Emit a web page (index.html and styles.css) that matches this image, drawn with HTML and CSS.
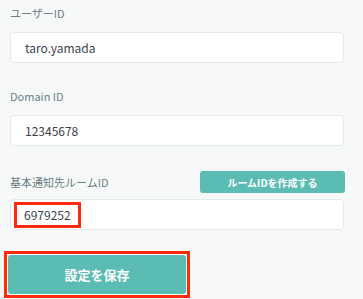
FILE: index.html
```html
<!DOCTYPE html>
<html lang="ja">
<head>
    <meta charset="UTF-8">
    <meta name="viewport" content="width=device-width, initial-scale=1.0">
    <title>設定</title>
    <link rel="stylesheet" href="styles.css">
</head>
<body>
    <div class="settings">
        <div class="field">
            <label class="label">ユーザーID</label>
            <div class="input">taro.yamada</div>
        </div>

        <div class="field">
            <label class="label">Domain ID</label>
            <div class="input">12345678</div>
        </div>

        <div class="field">
            <div class="label-row">
                <label class="label">基本通知先ルームID</label>
                <button class="small-btn">ルームIDを作成する</button>
            </div>
            <div class="input input-marked">
                <span class="mark">6979252</span>
            </div>
        </div>

        <div class="save-wrap">
            <button class="save-btn">設定を保存</button>
        </div>
    </div>
</body>
</html>
```

FILE: styles.css
```css
body {
    margin: 0;
    background-color: #f7f9f9;
    font-family: 'Noto Sans CJK JP', 'Noto Sans', sans-serif;
}

.settings {
    padding: 5px 19px 0 10px;
}

.field {
    margin-bottom: 25px;
}

.field:nth-child(3) {
    margin-bottom: 21px;
}

.label {
    display: block;
    font-size: 11px;
    line-height: 16px;
    color: #6b7f86;
    margin-bottom: 11px;
}

.label-row {
    display: flex;
    justify-content: space-between;
    align-items: center;
    margin-bottom: 6px;
}

.label-row .label {
    margin-bottom: 0;
}

.small-btn {
    width: 145px;
    height: 22px;
    margin-right: -1px;
    border: none;
    border-radius: 3px;
    background-color: #5bbcb4;
    color: white;
    font-family: inherit;
    font-size: 10px;
    font-weight: bold;
    padding: 0;
}

.input {
    display: flex;
    align-items: center;
    height: 29px;
    padding-left: 14px;
    background-color: white;
    border: 1px solid #e4e9ee;
    border-radius: 4px;
    font-size: 12px;
    color: #3a3f4c;
}

.input-marked {
    padding-left: 3px;
}

.mark {
    display: inline-block;
    border: 3px solid #ff2a0a;
    padding: 0 7px;
    height: 20px;
    line-height: 20px;
}

.save-wrap {
    display: inline-block;
    margin-left: -6px;
    border: 3px solid #ff2a0a;
    padding: 1px;
    background-color: white;
}

.save-btn {
    display: block;
    width: 178px;
    height: 39px;
    border: none;
    border-radius: 3px;
    background-color: #5bbcb4;
    color: white;
    font-family: inherit;
    font-size: 13px;
    font-weight: bold;
}
```
